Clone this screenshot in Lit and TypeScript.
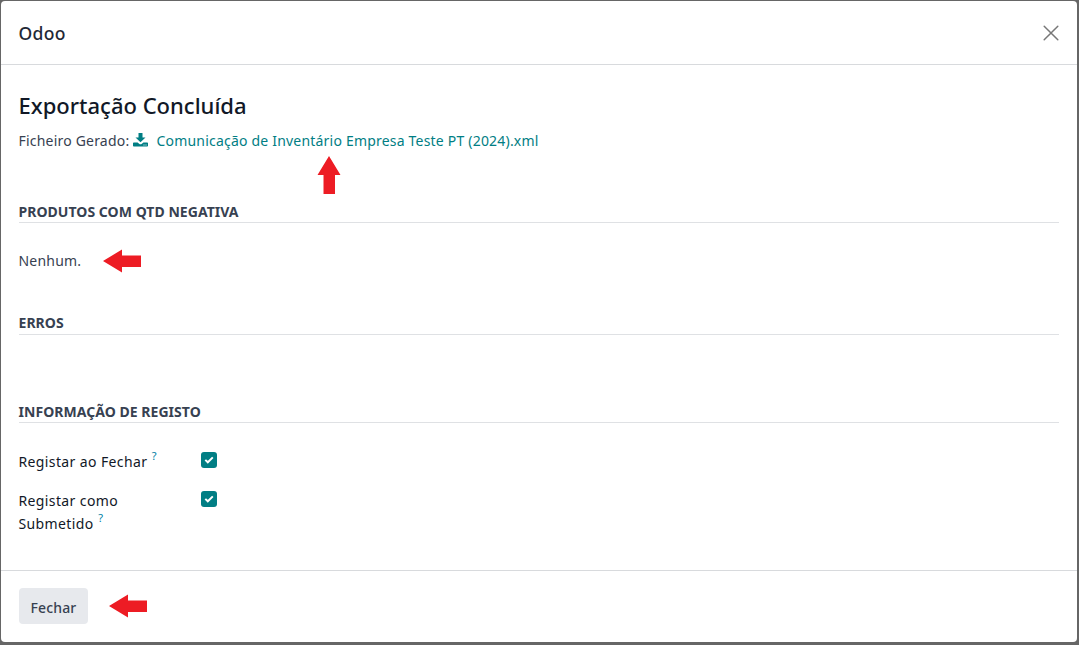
import { LitElement, html, css, svg } from "lit";
import { customElement, property } from "lit/decorators.js";

@customElement("pointer-arrow")
class PointerArrow extends LitElement {
  @property({ reflect: true }) direction = "left";
  static styles = css`
    :host { position: absolute; display: block; line-height: 0; }
    svg { display: block; fill: #ed1c24; }
  `;
  render() {
    return this.direction === "up"
      ? html`<svg width="24" height="38" viewBox="0 0 24 38">${svg`<path d="M12 0L23.5 19H18v19H6.500V19H.5z"/>`}</svg>`
      : html`<svg width="38" height="24" viewBox="0 0 38 24">${svg`<path d="M0 12L19 .5V6.500h19V18H19v5.500z"/>`}</svg>`;
  }
}

@customElement("check-box")
class CheckBox extends LitElement {
  static styles = css`
    :host { display: block; width: 16px; height: 16px; border-radius: 3px; background: #017e84; }
    svg { display: block; }
  `;
  render() {
    return html`<svg width="16" height="16" viewBox="0 0 16 16" fill="none" stroke="#fff" stroke-width="2"><path d="M4.300 7.900l2.500 2.400 5-4.900"/></svg>`;
  }
}

@customElement("app-root")
class AppRoot extends LitElement {
  static styles = css`
    :host {
      display: block; box-sizing: border-box; width: 100%; height: 645px;
      padding: 1px 2px 3px 1px; background: #666;
      font-family: "Noto Sans", "Open Sans", sans-serif; font-size: 14px; color: #374151;
    }
    * { box-sizing: border-box; }
    .dialog { height: 641px; display: flex; flex-direction: column; background: #fff; border-radius: 4px; overflow: hidden; }
    header { height: 64px; flex: none; display: flex; align-items: center; justify-content: space-between; padding: 0 18px 0 17.5px; border-bottom: 1px solid #d8dadd; }
    .name { font-size: 17.5px; font-weight: 500; line-height: 26px; letter-spacing: .3px; color: #1f2937; padding-top: 1px; }
    .close { display: block; }
    main { flex: 1; padding: 24px 18px 0 17.500px; }
    h1 { margin: 0; font-size: 22px; font-weight: 500; line-height: 32px; color: #111827; }
    .file { display: flex; align-items: center; height: 21px; margin-top: 9px; white-space: nowrap; letter-spacing: .2px; }
    .caption { width: 111px; }
    .link { position: relative; display: flex; align-items: center; color: #017e84; margin-left: 3.500px; gap: 8.500px; }
    .link svg { margin-top: -1px; }
    .link pointer-arrow { left: 184px; top: 25px; }
    h2 { margin: 0; height: 23px; font-size: 14px; font-weight: 700; line-height: 24px; letter-spacing: .04px; border-bottom: 1px solid #dfe1e4; text-transform: uppercase; white-space: nowrap; }
    .negative { margin-top: 49px; }
    .none { position: relative; width: max-content; margin-top: 27px; line-height: 22px; letter-spacing: .2px; }
    .none pointer-arrow { left: 84.500px; top: -1px; }
    .errors { margin-top: 40px; line-height: 22px; }
    .record { margin-top: 65px; }
    .row { display: grid; grid-template-columns: 182.500px 16px; line-height: 23px; color: #111827; letter-spacing: .38px; }
    .row .label { max-width: 140px; }
    .row + .row { margin-top: 16px; }
    .first { margin-top: 27px; }
    .row check-box { margin-top: 2px; }
    .help { font-size: 11px; line-height: 0; vertical-align: 7px; color: #0180a5; margin-left: .5px; }
    footer { position: relative; height: 72px; flex: none; display: flex; align-items: flex-start; padding: 17px 18px; border-top: 1px solid #d8dadd; }
    button { width: 69px; height: 36px; padding: 2px 0 0; border: 0; border-radius: 4px; background: #e7e9ed; font: 500 14px "Noto Sans", sans-serif; letter-spacing: .15px; color: #374151; }
    footer pointer-arrow { left: 108px; top: 23px; }
  `;
  render() {
    return html`
      <div class="dialog">
        <header>
          <span class="name">Odoo</span>
          <svg class="close" width="16" height="16" viewBox="0 0 16 16" stroke="#777" stroke-width="1.500" stroke-linecap="round"><path d="M1.200 1.200l13.600 13.600M14.800 1.200L1.200 14.800"/></svg>
        </header>
        <main>
          <h1>Exportação Concluída</h1>
          <div class="file">
            <span class="caption">Ficheiro Gerado:</span>
            <a class="link">
              <svg width="15" height="14" viewBox="0 0 15 14" fill="#017e84"><path d="M5.500 0h4v4.500h3L7.500 9.200l-5-4.700h3z"/><path d="M.8 9.500h3.800l1.500 1.300q1.400 1 2.800 0l1.500-1.300h3.800q.8 0 .8.800v2.400q0 .8-.8.800H.8q-.8 0-.8-.8v-2.400q0-.8.800-.8zM10.500 11.500v1h1v-1zm2 0v1h1v-1z" fill-rule="evenodd"/></svg>
              <span>Comunicação de Inventário Empresa Teste PT (2024).xml</span>
              <pointer-arrow direction="up"></pointer-arrow>
            </a>
          </div>
          <h2 class="negative">Produtos com Qtd Negativa</h2>
          <div class="none">Nenhum.<pointer-arrow></pointer-arrow></div>
          <h2 class="errors">Erros</h2>
          <h2 class="record">Informação de Registo</h2>
          <div class="row first"><span class="label">Registar ao Fechar <sup class="help">?</sup></span><check-box></check-box></div>
          <div class="row"><span class="label">Registar como<br>Submetido <sup class="help">?</sup></span><check-box></check-box></div>
        </main>
        <footer><button>Fechar</button><pointer-arrow></pointer-arrow></footer>
      </div>
    `;
  }
}
